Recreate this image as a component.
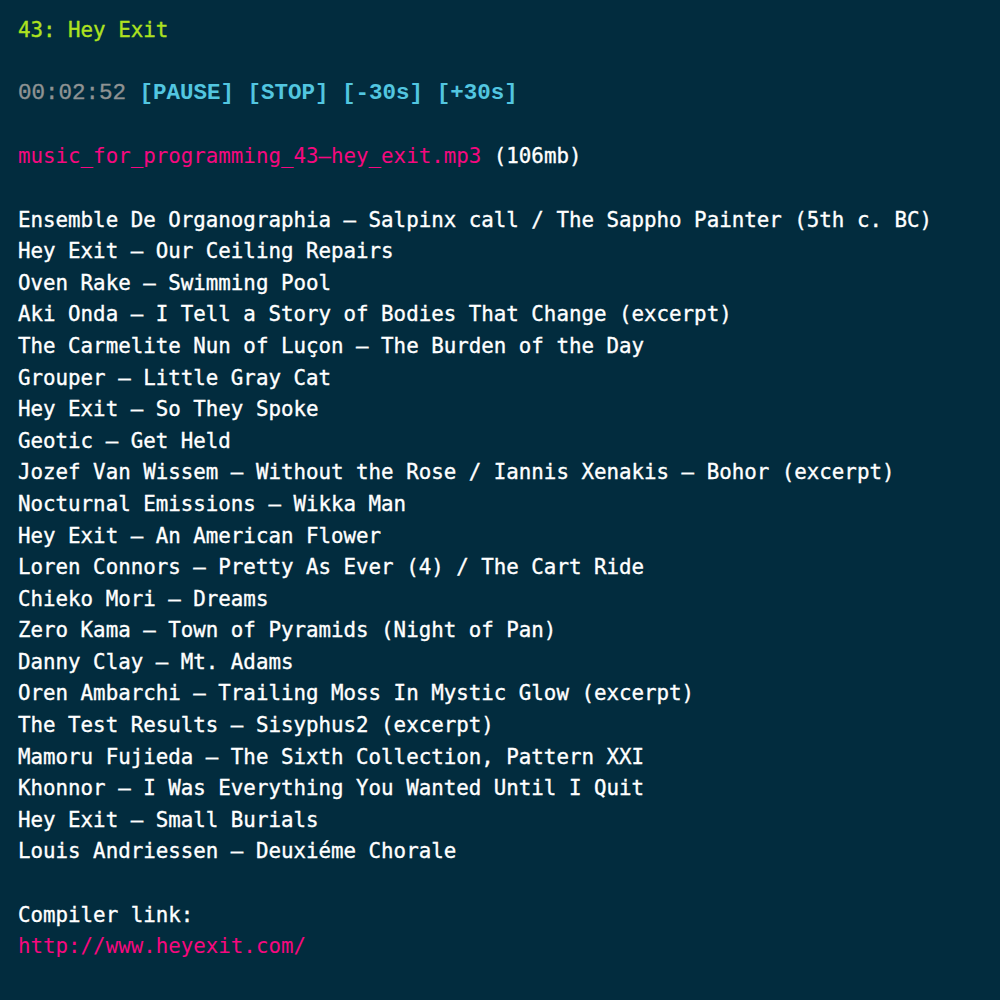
import React from "react";

const tracks = [
  "Ensemble De Organographia – Salpinx call / The Sappho Painter (5th c. BC)",
  "Hey Exit – Our Ceiling Repairs",
  "Oven Rake – Swimming Pool",
  "Aki Onda – I Tell a Story of Bodies That Change (excerpt)",
  "The Carmelite Nun of Luçon – The Burden of the Day",
  "Grouper – Little Gray Cat",
  "Hey Exit – So They Spoke",
  "Geotic – Get Held",
  "Jozef Van Wissem – Without the Rose / Iannis Xenakis – Bohor (excerpt)",
  "Nocturnal Emissions – Wikka Man",
  "Hey Exit – An American Flower",
  "Loren Connors – Pretty As Ever (4) / The Cart Ride",
  "Chieko Mori – Dreams",
  "Zero Kama – Town of Pyramids (Night of Pan)",
  "Danny Clay – Mt. Adams",
  "Oren Ambarchi – Trailing Moss In Mystic Glow (excerpt)",
  "The Test Results – Sisyphus2 (excerpt)",
  "Mamoru Fujieda – The Sixth Collection, Pattern XXI",
  "Khonnor – I Was Everything You Wanted Until I Quit",
  "Hey Exit – Small Burials",
  "Louis Andriessen – Deuxiéme Chorale",
];

export default function App() {
  return (
    <div className="min-h-[1000px] w-full bg-[#022c3e] px-[18px] pt-[15px] text-[20.8px] leading-[31.6px] text-white font-['DejaVu_Sans_Mono',monospace] whitespace-pre [-webkit-text-stroke:0.35px_currentColor]">
      <div className="text-[#aee21f]">43: Hey Exit</div>
      <div className="h-[31.6px]" />
      <div className="font-['Liberation_Mono',monospace] text-[22.5px] [-webkit-text-stroke:0px]">
        <span className="text-[#8f9393] [-webkit-text-stroke:0.4px_#8f9393]">00:02:52</span>{" "}
        <span className="font-bold text-[#52c6e0]">[PAUSE]</span>{" "}
        <span className="font-bold text-[#52c6e0]">[STOP]</span>{" "}
        <span className="font-bold text-[#52c6e0]">[-30s]</span>{" "}
        <span className="font-bold text-[#52c6e0]">[+30s]</span>
      </div>
      <div className="h-[31.6px]" />
      <div>
        <span className="text-[#f6087f] [-webkit-text-stroke:0px]">music_for_programming_43–hey_exit.mp3</span>{" "}
        <span>(106mb)</span>
      </div>
      <div className="h-[31.6px]" />
      {tracks.map((t) => (
        <div key={t}>{t}</div>
      ))}
      <div className="h-[31.6px]" />
      <div>Compiler link:</div>
      <div className="text-[#f6087f] [-webkit-text-stroke:0px]">http://www.heyexit.com/</div>
    </div>
  );
}
